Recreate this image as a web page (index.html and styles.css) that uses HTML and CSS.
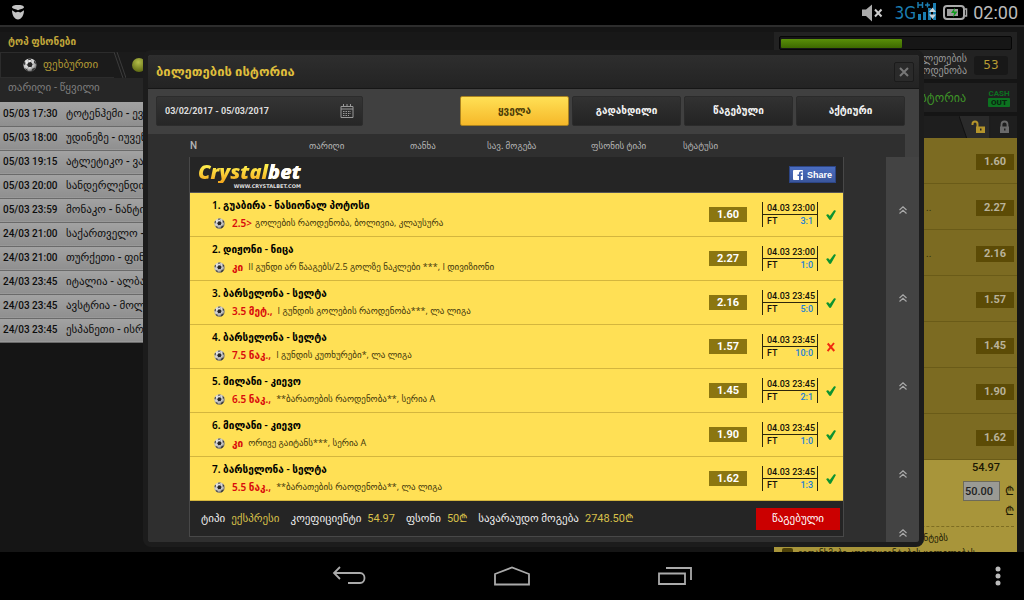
FILE: index.html
```html
<!DOCTYPE html>
<html lang="ka">
<head>
<meta charset="utf-8">
<meta name="viewport" content="width=device-width, initial-scale=1">
<title>ბილეთების ისტორია</title>
<link rel="stylesheet" href="styles.css">
</head>
<body>
<svg class="defs" width="0" height="0" aria-hidden="true">
  <defs>
    <radialGradient id="ballShade" cx="40%" cy="35%" r="70%"><stop offset="0" stop-color="#fff"/><stop offset=".6" stop-color="#c9c9c9"/><stop offset="1" stop-color="#555"/></radialGradient>
    <radialGradient id="tennisShade" cx="45%" cy="30%" r="70%"><stop offset="0" stop-color="#b3bd4a"/><stop offset="1" stop-color="#5f6a12"/></radialGradient>
    <symbol id="ball" viewBox="0 0 14 14">
      <circle cx="7" cy="7" r="6.6" fill="url(#ballShade)"/>
      <path d="M5.2 4.6 8 4l1.7 2.3-1.2 2.6-3 .2L4 6.900z" fill="#262626"/>
      <path d="M5 .8 8.500.6 7.600 2 5.400 2.100zM11 2.200l2 2.600-.3 1.500-1.700-1.500zM.6 5.200l1.300-2.100.6 2.100L1.300 7.500zM2 10.300l2.200.9.8 2-2-1zM9 11l2.500-1.300.9.6-2.200 2.500-1.600.4z" fill="#3a3a3a"/>
      <path d="M5.200 4.600 5 2M8 4l.5-2M9.700 6.300l2-.5M8.500 8.900l1 2M5.500 9.100l-1.300 2.100M4 6.900 2 6" stroke="#777" stroke-width=".5" fill="none"/>
    </symbol>
    <symbol id="tick" viewBox="0 0 10 10"><path d="M.2 5.200C.9 3.900 2.400 4 3 4.900l.8 1.100L7.700.8c.7-.7 1.900-.5 2.200.3L5.200 9.200c-.6.900-1.700.9-2.200 0z" fill="#0d9331"/></symbol>
    <symbol id="cross" viewBox="0 0 10 10"><path d="M1.700 1.500 8.300 9M8 1 1.600 9.200" stroke="#f02a10" stroke-width="1.900" fill="none"/></symbol>
    <symbol id="up" viewBox="0 0 8 8"><path d="M.5 4 4 .8 7.500 4M.5 7.500 4 4.300 7.500 7.500" stroke="#a8a8a8" stroke-width="1.200" fill="none"/></symbol>
  </defs>
</svg>

<header class="status">
  <svg width="14" height="15" viewBox="0 0 14 15" role="img" aria-label="შეტყობინება"><path d="M1 2.500C1 .5 4 0 7 0s6 .5 6 2.500C12 4 9 4.200 7 5.200 5 4.200 2 4 1 2.500z" fill="#c4c4c4"/><path d="M1 5.200 4.500 7.500 7 6.800l2.500.7L13 5.200C13 10 10.500 14.500 7 14.500S1 10 1 5.200z" fill="#c4c4c4"/></svg>
  <div class="status-right">
    <svg width="21" height="18" viewBox="0 0 21 18" aria-hidden="true"><path d="M0 5.500h4L10 .5v17L4 12H0z" fill="#aaa"/><path d="m13 5.500 6.500 7M19.500 5.500l-6.500 7" stroke="#ccc" stroke-width="2"/></svg>
    <span class="net">3G</span>
    <svg class="signal" width="20" height="18" viewBox="0 0 20 18" aria-hidden="true"><path d="M1 0v6M5.500 0v6M1 3h4.500M8 3h5M10.500.5v5" stroke="#1b7db0" stroke-width="1.500"/><path d="M1 12h3v6H1zM6 10h3v8H6zM11 6h3v12h-3zM16 1h3v17h-3z" fill="#1b7db0"/><path d="m12 10 3.500-4.500L19 10zM12 12.500h7L15.500 17z" fill="#c8d4da"/></svg>
    <svg width="25" height="15" viewBox="0 0 25 15" aria-hidden="true"><rect x="1" y="1" width="20" height="13" rx="3" fill="none" stroke="#aaa" stroke-width="2"/><path d="M22 4h1.500v7H22" fill="none" stroke="#aaa" stroke-width="1.500"/><path d="M4 4h11v7H4z" fill="#9c9c9c"/><path d="m12 2.500-4 5.500h3l-1 4.500 4.500-6H11z" fill="#0f9c1c"/></svg>
    <time class="clock">02:00</time>
  </div>
</header>

<div class="app">
  <main class="page" id="page">
    <section class="top-bets">
      <h2 class="section-title">ტოპ ფსონები</h2>
      <div class="tabs">
        <button class="tab"><svg width="14" height="14"><use href="#ball"/></svg>ფეხბურთი</button>
        <svg class="slant" width="12" height="26" viewBox="0 0 12 26" aria-hidden="true"><path d="M0 0 9 26M3 0l9 26" stroke="#3c3c3c" fill="none"/></svg>
        <svg width="14" height="14" viewBox="0 0 14 14" aria-hidden="true"><circle cx="7" cy="7" r="7" fill="url(#tennisShade)"/></svg>
      </div>
      <table class="pairs">
        <thead><tr><th colspan="2">თარიღი - წყვილი</th></tr></thead>
        <tbody>
          <tr><td>05/03 17:30</td><td>ტოტენჰემი - ევე</td></tr>
          <tr><td>05/03 18:00</td><td>უდინეზე - იუვენტუსი</td></tr>
          <tr><td>05/03 19:15</td><td>ატლეტიკო - ვალენსია</td></tr>
          <tr><td>05/03 20:00</td><td>სანდერლენდი - სიტი</td></tr>
          <tr><td>05/03 23:59</td><td>მონაკო - ნანტი</td></tr>
          <tr><td>24/03 21:00</td><td>საქართველო - სერბეთი</td></tr>
          <tr><td>24/03 21:00</td><td>თურქეთი - ფინეთი</td></tr>
          <tr><td>24/03 23:45</td><td>იტალია - ალბანეთი</td></tr>
          <tr><td>24/03 23:45</td><td>ავსტრია - მოლდოვა</td></tr>
          <tr><td>24/03 23:45</td><td>ესპანეთი - ისრაელი</td></tr>
        </tbody>
      </table>
    </section>

    <aside class="slip">
      <div class="counter">
        <div class="track"><div class="fill"></div></div>
        <div class="count-row"><span class="count-label">ბილეთების<br>რაოდენობა</span><span class="count">53</span></div>
      </div>
      <div class="history"><a class="history-link" href="#modal">ბილეთების ისტორია</a><span class="cash">CASH<b>OUT</b></span></div>
      <div class="locks">
        <svg width="32" height="23" viewBox="0 0 32 23" aria-hidden="true"><path d="m0 0 8 23h24V0" fill="#2a2a2a"/><path d="m0 0 8 23M31 0v23" stroke="#111" fill="none"/><path d="M13.500 9V8a2.500 2.500 0 0 1 5 0v3" fill="none" stroke="#b4942b" stroke-width="2"/><path d="M17 10.500h9V17h-9z" fill="#b4942b"/><path d="M21 12.500h1.500v2H21z" fill="#222"/></svg>
        <svg width="26" height="23" viewBox="0 0 26 23" aria-hidden="true"><path d="M10.500 11V8.500a3 3 0 0 1 6 0V11" fill="none" stroke="#6a6a6a" stroke-width="1.800"/><path d="M9 10.500h9V17H9z" fill="#6a6a6a"/><path d="M13 12.500h1.500v2H13z" fill="#222"/></svg>
      </div>
      <ul class="picks">
        <li><b>1.60</b></li><li><span>..</span><b>2.27</b></li><li><span>..</span><b>2.16</b></li><li><b>1.57</b></li><li><b>1.45</b></li><li><b>1.90</b></li><li><b>1.62</b></li>
      </ul>
      <div class="stake">
        <strong class="total">54.97</strong>
        <label class="stake-row"><input class="amount" type="text" value="50.00" aria-label="ფსონი"><span>₾</span></label>
        <div class="win">₾</div>
        <p class="terms">კოეფიციენტებს</p>
        <label class="agree"><input type="checkbox">ვეთანხმები კოეფიციენტების ცვლილებას</label>
      </div>
    </aside>
  </main>

  <section class="modal" id="modal" role="dialog" aria-labelledby="modal-title">
    <header class="modal-head">
      <h1 class="modal-title" id="modal-title">ბილეთების ისტორია</h1>
      <button class="close" aria-label="დახურვა"><svg width="10" height="10" viewBox="0 0 10 10"><path d="m1 1 8 8M9 1 1 9" stroke="#777" stroke-width="2"/></svg></button>
    </header>
    <div class="filters">
      <button class="dates">03/02/2017 - 05/03/2017
        <svg width="14" height="14" viewBox="0 0 14 14" aria-hidden="true"><path d="M1 2.500h12v11H1zM1 5h12M3.500 0v3M7 0v3M10.500 0v3" stroke="#999" fill="none"/><path d="M3 7.500h8M3 9.500h8M3 11.500h6" stroke="#999" stroke-dasharray="1.500 1"/></svg>
      </button>
      <div class="choices">
        <button class="choice chosen">ყველა</button><button class="choice">გადახდილი</button><button class="choice">წაგებული</button><button class="choice">აქტიური</button>
      </div>
    </div>
    <table class="columns">
      <thead><tr><th class="c-n">N</th><th class="c-date">თარიღი</th><th class="c-sum">თანხა</th><th class="c-win">სავ. მოგება</th><th class="c-type">ფსონის ტიპი</th><th>სტატუსი</th></tr></thead>
    </table>
    <div class="results">
      <article class="ticket">
        <header class="ticket-head">
          <div class="brand"><span class="brand-name">Crystal<span class="brand-end">bet</span></span><small class="brand-url">WWW.CRYSTALBET.COM</small></div>
          <button class="share"><svg width="10" height="10" viewBox="0 0 10 10" aria-hidden="true"><rect width="10" height="10" rx="1" fill="#fff"/><path d="M6 10V6H4.500V4.400H6V3.500C6 2 6.800 1.300 8.200 1.300h1.300v1.500h-.9c-.6 0-.8.3-.8.8v.8h1.600L9.200 6H7.800v4z" fill="#4060ae"/></svg>Share</button>
        </header>
        <ol class="legs">
          <li class="leg"><div class="info"><h3 class="match">1. გუაბირა - ნასიონალ პოტოსი</h3><p class="bet"><svg width="11" height="11"><use href="#ball"/></svg><b>2.5&gt;</b><span>გოლების რაოდენობა, ბოლივია, კლაუსურა</span></p></div><span class="odds">1.60</span><div class="score"><span class="when">04.03 23:00</span><span>FT</span><em>3:1</em></div><svg width="10" height="10"><use href="#tick"/></svg></li>
          <li class="leg"><div class="info"><h3 class="match">2. დიჟონი - ნიცა</h3><p class="bet"><svg width="11" height="11"><use href="#ball"/></svg><b>კი</b><span class="far">II გუნდი არ წააგებს/2.5 გოლზე ნაკლები ***, I დივიზიონი</span></p></div><span class="odds">2.27</span><div class="score"><span class="when">04.03 23:00</span><span>FT</span><em>1:0</em></div><svg width="10" height="10"><use href="#tick"/></svg></li>
          <li class="leg"><div class="info"><h3 class="match">3. ბარსელონა - სელტა</h3><p class="bet"><svg width="11" height="11"><use href="#ball"/></svg><b>3.5 მეტ.,</b><span class="far">I გუნდის გოლების რაოდენობა***, ლა ლიგა</span></p></div><span class="odds">2.16</span><div class="score"><span class="when">04.03 23:45</span><span>FT</span><em>5:0</em></div><svg width="10" height="10"><use href="#tick"/></svg></li>
          <li class="leg"><div class="info"><h3 class="match">4. ბარსელონა - სელტა</h3><p class="bet"><svg width="11" height="11"><use href="#ball"/></svg><b>7.5 ნაკ.,</b><span class="far">I გუნდის კუთხურები*, ლა ლიგა</span></p></div><span class="odds">1.57</span><div class="score"><span class="when">04.03 23:45</span><span>FT</span><em>10:0</em></div><svg width="10" height="10"><use href="#cross"/></svg></li>
          <li class="leg"><div class="info"><h3 class="match">5. მილანი - კიევო</h3><p class="bet"><svg width="11" height="11"><use href="#ball"/></svg><b>6.5 ნაკ.,</b><span class="far">**ბარათების რაოდენობა**, სერია A</span></p></div><span class="odds">1.45</span><div class="score"><span class="when">04.03 23:45</span><span>FT</span><em>2:1</em></div><svg width="10" height="10"><use href="#tick"/></svg></li>
          <li class="leg"><div class="info"><h3 class="match">6. მილანი - კიევო</h3><p class="bet"><svg width="11" height="11"><use href="#ball"/></svg><b>კი</b><span class="far">ორივე გაიტანს***, სერია A</span></p></div><span class="odds">1.90</span><div class="score"><span class="when">04.03 23:45</span><span>FT</span><em>1:0</em></div><svg width="10" height="10"><use href="#tick"/></svg></li>
          <li class="leg"><div class="info"><h3 class="match">7. ბარსელონა - სელტა</h3><p class="bet"><svg width="11" height="11"><use href="#ball"/></svg><b>5.5 ნაკ.,</b><span class="far">**ბარათების რაოდენობა**, ლა ლიგა</span></p></div><span class="odds">1.62</span><div class="score"><span class="when">04.03 23:45</span><span>FT</span><em>1:3</em></div><svg width="10" height="10"><use href="#tick"/></svg></li>
        </ol>
        <footer class="ticket-foot">
          <dl class="summary">
            <div><dt>ტიპი</dt><dd>ექსპრესი</dd></div><div><dt>კოეფიციენტი</dt><dd>54.97</dd></div><div><dt>ფსონი</dt><dd>50₾</dd></div><div><dt>სავარაუდო მოგება</dt><dd>2748.50₾</dd></div>
          </dl>
          <span class="lost">წაგებული</span>
        </footer>
      </article>
      <div class="rail">
        <svg width="8" height="8"><use href="#up"/></svg><svg width="8" height="8"><use href="#up"/></svg><svg width="8" height="8"><use href="#up"/></svg><svg width="8" height="8"><use href="#up"/></svg><svg class="rail-end" width="8" height="8"><use href="#up"/></svg>
      </div>
    </div>
  </section>
</div>

<nav class="keys" aria-label="ნავიგაცია">
  <span></span>
  <button class="key" aria-label="უკან"><svg width="34" height="20" viewBox="0 0 34 20"><path d="M8 1 2 7l6 6M2 7h26c6 0 6 10 0 10H16" fill="none" stroke="#aaa" stroke-width="1.800"/></svg></button>
  <button class="key" aria-label="მთავარი"><svg width="36" height="20" viewBox="0 0 36 20"><path d="M1 18.500V8L18 1.500 35 8v10.500z" fill="none" stroke="#aaa" stroke-width="1.800"/></svg></button>
  <button class="key" aria-label="ბოლო აპები"><svg width="34" height="20" viewBox="0 0 34 20"><path d="M1 7.500h26v10.500H1zM8 2h25v12" fill="none" stroke="#aaa" stroke-width="1.800"/></svg></button>
  <button class="key more" aria-label="მეტი"><svg width="6" height="20" viewBox="0 0 6 20"><circle cx="3" cy="3" r="2.500" fill="#bbb"/><circle cx="3" cy="10" r="2.500" fill="#bbb"/><circle cx="3" cy="17" r="2.500" fill="#bbb"/></svg></button>
</nav>
</body>
</html>
```
FILE: styles.css
```css
* { box-sizing: border-box; }
body {
  margin: 0;
  min-height: 100vh;
  display: flex;
  flex-direction: column;
  background: #000;
  color: #ccc;
  font: 10px/14px Roboto, "DejaVu Sans", sans-serif;
}
h1, h2, h3, p, ol, ul, dl, dd { margin: 0; padding: 0; font-size: inherit; }
ol, ul { list-style: none; }
button { font: inherit; border: 0; padding: 0; background: none; color: inherit; }
svg { flex: none; display: block; }
.defs { position: absolute; }

/* device status bar */
.status { height: 25px; padding: 0 6px 0 11px; display: flex; align-items: center; justify-content: space-between; }
.status-right { display: flex; align-items: center; }
.net { margin-left: 12px; font: 17px/24px "DejaVu Sans Condensed", "Noto Sans", sans-serif; color: #1b7db0; }
.signal { margin: 0 6px 4px 1px; }
.clock { margin-left: 5px; font-size: 18px; line-height: 27px; color: #bbb; }

/* page behind the dialog */
.app { position: relative; flex: 1; overflow: hidden; background: #151515; border-top: 2px solid #2d2d2d; }
.page { position: absolute; inset: 0; display: flex; padding: 5px 7px 0 0; overflow: hidden; }
.top-bets { flex: 1; min-width: 0; }
.section-title { padding: 3px 8px; background: #181818; color: #c0a63a; font-weight: bold; font-size: 10px; height: 20px; }
.tabs { display: flex; align-items: center; height: 26px; background: #1b1b1b; }
.tab { display: flex; align-items: center; gap: 6px; height: 26px; padding: 0 16px 0 22px; border: solid #2c2c2c; border-width: 1px 0 1px 1px; color: #b39a35; font-size: 11px; }
.slant { margin-right: 6px; }
.pairs { width: 100%; border-collapse: collapse; color: #0d0d0d; font-weight: 500; white-space: nowrap; }
.pairs th { height: 24px; padding: 0 8px 5px; background: #262626; color: #7d7d7d; text-align: left; font-weight: normal; font-size: 11px; }
.pairs td { height: 24px; padding: 0 3px; background: linear-gradient(#a2a2a2, #8f8f8f); border-bottom: 1px solid #6a6a6a; }
.pairs td:first-child { width: 63px; }
.pairs td:last-child { font-size: 11px; }

.slip { width: 243px; display: flex; flex-direction: column; gap: 4px; }
.slip > * { flex: none; }
.counter { padding: 4px 5px 0; height: 47px; background: #222; }
.track { height: 14px; padding: 3px 1px; border-radius: 2px; background: #161616; border: 1px solid #060606; }
.fill { width: 53%; height: 9px; margin-top: -1px; background: linear-gradient(#598f09, #3d6800); border-radius: 1px; }
.count-row { display: flex; justify-content: flex-end; align-items: center; padding: 3px 4px; gap: 7px; }
.count-label { text-align: right; line-height: 12px; font-size: 10px; color: #9a9a9a; }
.count { width: 34px; border-radius: 3px; background: #181818; color: #b89c34; font: 12px/19px "DejaVu Sans", sans-serif; text-align: center; }
.history { display: flex; align-items: center; justify-content: flex-end; gap: 22px; height: 29px; padding-right: 7px; background: #202020; }
.history-link { color: #3f9428; text-decoration: none; font-size: 12px; }
.cash { display: grid; width: 22px; color: #0c7220; font-weight: bold; font-size: 8px; line-height: 9px; text-align: center; }
.cash b { background: #0c7220; color: #0a2710; border-radius: 1px; }
.locks { display: flex; justify-content: flex-end; height: 23px; margin-bottom: -5px; background: #1e1e1e; }
.picks { background: #7c6b22; }
.picks li { display: flex; justify-content: flex-end; align-items: center; height: 46px; padding: 3px 3px 0 0; border-bottom: 1px solid #6a5b18; }
.picks span { width: 50px; color: #332b08; }
.picks b { width: 38px; background: #5c4b06; color: #b9b29a; text-align: center; line-height: 16px; font-size: 11px; }
.stake { margin-top: -4px; padding: 0 3px 0 8px; background: #a8953a; color: #1a1703; }
.total { display: block; padding-right: 14px; text-align: right; font-size: 11px; line-height: 15px; font-weight: 500; }
.stake-row { display: flex; justify-content: flex-end; align-items: center; gap: 5px; margin-top: 6px; font-size: 12px; }
.amount { width: 37px; height: 20px; padding: 0 1px; border: 1px solid #6d6a5a; background: #9a9a94; font: 500 11px/18px Roboto, sans-serif; color: #222; }
.win { text-align: right; line-height: 16px; font-size: 12px; padding: 2px 0 7px; border-bottom: 1px dashed #7d6d22; }
.terms { padding: 4px 66px 1px 0; text-align: right; font-size: 9px; }
.agree { display: flex; align-items: center; gap: 5px; font-size: 9px; white-space: nowrap; }
.agree input { margin: 0; width: 11px; height: 11px; appearance: none; background: #4d4108; border-radius: 2px; }

/* dialog */
.modal { position: absolute; inset: 23px 100px 5px 143px; display: flex; flex-direction: column; border: 5px solid #1c1c1c; border-radius: 8px; background: #404040; overflow: hidden; }
.modal-head { display: flex; align-items: center; justify-content: space-between; height: 34px; padding: 0 5px 0 8px; background: linear-gradient(#2e2e2e, #232323); border-bottom: 1px solid #161616; }
.modal-title { color: #dfbe3c; font-size: 13px; font-weight: 600; }
.close { display: grid; place-items: center; width: 20px; height: 20px; border: 1px solid #1b1b1b; border-radius: 2px; background: #2a2a2a; }
.filters { display: flex; justify-content: space-between; padding: 7px 14px 8px 8px; }
.dates { display: flex; justify-content: space-between; align-items: center; width: 207px; height: 30px; padding: 0 8px; border-radius: 2px; border: 1px solid #2c2c2c; background: linear-gradient(#343434, #262626); color: #ddd; font-weight: bold; font-size: 9px; }
.choices { display: flex; gap: 3px; }
.choice { width: 109px; height: 30px; border: 1px solid #2b2b2b; border-radius: 2px; background: linear-gradient(#323232, #232323); color: #f2f2f2; font-weight: bold; font-size: 10px; }
.chosen { background: linear-gradient(#ffe055, #f6b829); border-color: #a98220; color: #4d3d08; }
.columns { table-layout: fixed; border-collapse: collapse; margin-right: 14px; background: #2f2f2f; }
.columns th { padding: 0; height: 23px; text-align: left; font-weight: 500; font-size: 9px; color: #b5b5b5; }
.columns .c-n { width: 161px; padding-left: 42px; font-size: 10px; }
.c-date { width: 101px; }
.c-sum { width: 77px; }
.c-win { width: 104px; }
.c-type { width: 92px; }
.results { flex: 1; display: flex; min-height: 0; background: #2f2f2f; }
.ticket { flex: 1; margin: 0 42px 5px 41px; border: solid #484848; border-width: 0 1px 1px; background: #252525; display: flex; flex-direction: column; }
.ticket-head { display: flex; justify-content: space-between; align-items: center; height: 36px; padding: 0 7px 0 8px; border-bottom: 1px solid #555; }
.brand { display: grid; justify-items: end; }
.brand-name { font: italic 900 20px/22px "Noto Sans", sans-serif; color: transparent; background: linear-gradient(#fff04e 20%, #f3a51c); background-clip: text; }
.brand-end { color: #fff; }
.brand-url { font: bold 5px/6px "DejaVu Sans", sans-serif; color: #ddd; }
.share { display: flex; align-items: center; gap: 4px; width: 47px; height: 17px; padding: 0 3px; background: linear-gradient(#4a6dc0, #3b579d); border: 1px solid #2c4585; color: #fff; font: bold 9px/14px "Liberation Sans", sans-serif; }
.leg { display: grid; grid-template-columns: 1fr 38px 71px 18px; align-items: center; height: 44px; padding: 0 7px 0 22px; background: #ffe055; border-bottom: 1px solid #d4b63e; color: #15120a; }
.leg > svg { justify-self: end; }
.info { padding-bottom: 1px; }
.match { font: 600 10px/18px "Noto Sans", "DejaVu Sans", sans-serif; color: #000; }
.bet { display: flex; align-items: center; height: 18px; padding-left: 2px; font: 9px/18px "Open Sans", "DejaVu Sans", sans-serif; color: #3f370c; white-space: nowrap; }
.bet b { margin: 0 3px 0 7px; color: #d90c0c; font: 600 10px/18px "Noto Sans", "DejaVu Sans", sans-serif; }
.far { margin-left: 2px; }
.odds { background: #8b7610; color: #fff; text-align: center; font-weight: bold; font-size: 11px; line-height: 15px; }
.score { display: grid; grid-template-columns: auto auto; margin-left: 15px; border: solid #2d270c; border-width: 0 1px; padding: 0 4px; line-height: 12px; font-size: 9px; font-weight: 500; white-space: nowrap; }
.when { grid-column: 1 / 3; margin: 0 -4px; padding-left: 4px; border-bottom: 1px solid #2d270c; }
.score em { font-style: normal; text-align: right; color: #1d7fd8; }
.ticket-foot { flex: 1; display: flex; align-items: center; justify-content: space-between; padding: 0 3px 0 11px; }
.summary { display: flex; gap: 11px; font-size: 11px; color: #eee; white-space: nowrap; }
.summary div { display: flex; gap: 6px; }
.summary dd { color: #d9c14a; }
.lost { width: 84px; background: #cb0000; color: #fff; text-align: center; font-size: 11px; line-height: 22px; }
.rail { width: 33px; display: flex; flex-direction: column; align-items: center; gap: 80px; padding-top: 49px; background: #434343; }
.rail-end { margin-top: -29px; }

/* device navigation keys */
.keys { display: grid; grid-template-columns: 268px 1fr 1fr 1fr 268px; height: 48px; align-items: center; }
.key { display: grid; place-items: center; height: 48px; }
.more { justify-items: end; padding-right: 23px; }
```
